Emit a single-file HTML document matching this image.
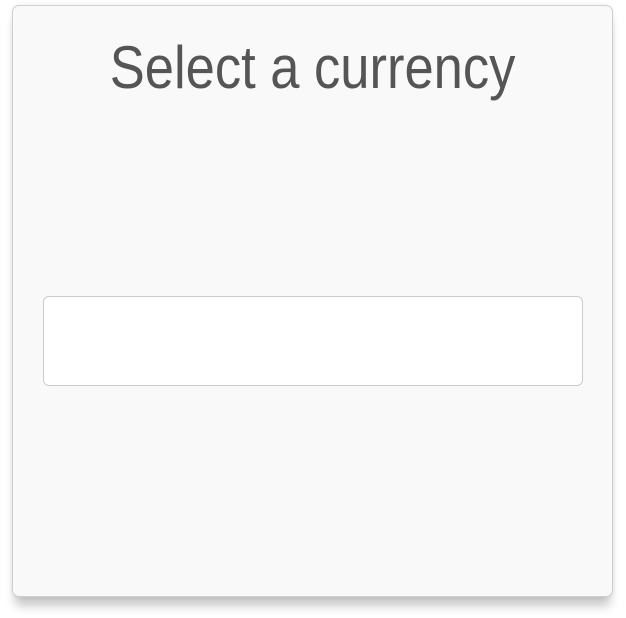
<!DOCTYPE html>
<html><head><style>
html,body{margin:0;padding:0;width:626px;height:618px;background:#fff;overflow:hidden}
.card{position:absolute;left:12px;top:5px;width:599px;height:590px;background:#f9f9f9;border:1px solid #cfcfcf;border-radius:7px;box-shadow:0 12px 10px -3px rgba(0,0,0,0.22),0 0 5px rgba(0,0,0,0.08)}
h1{position:absolute;left:0;right:0;top:30px;margin:0;text-align:center;font-family:"Liberation Sans",sans-serif;font-weight:normal;font-size:60px;line-height:64px;color:#555;transform:scaleX(0.875);transform-origin:300px 0}
.inp{position:absolute;left:30px;top:290px;width:538px;height:88px;background:#fff;border:1px solid #cccccc;border-radius:6px}
</style></head><body>
<div class="card"><h1>Select a currency</h1><div class="inp"></div></div>
</body></html>
